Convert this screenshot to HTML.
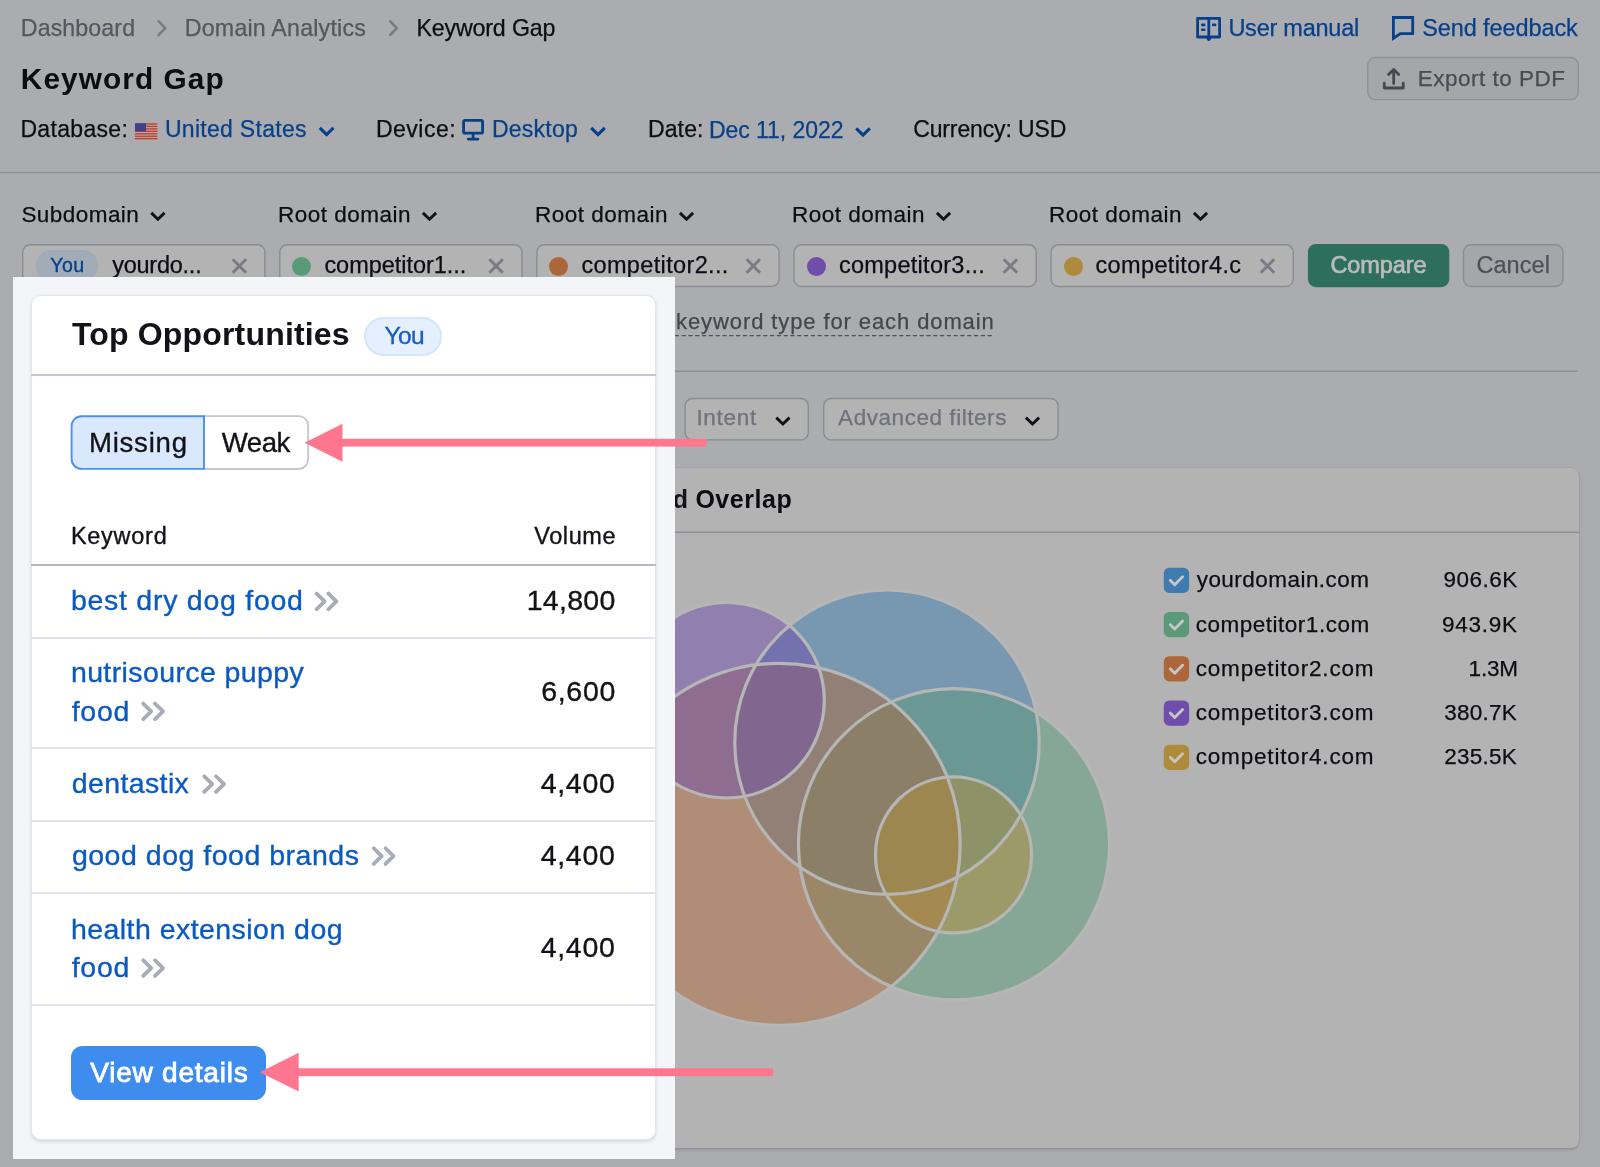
<!DOCTYPE html>
<html lang="en"><head><meta charset="utf-8"><title>Keyword Gap</title>
<style>
html,body{margin:0;padding:0}
body{width:1600px;height:1167px;overflow:hidden;background:#ABACAF;font-family:"Liberation Sans",sans-serif;position:relative}
.a{position:absolute}
#page,#fg,#fgt{position:absolute;left:0;top:0;width:1600px;height:1167px;overflow:hidden;transform:translateZ(0)}
.dot{position:absolute;width:19px;height:19px;border-radius:50%;top:256.6px}
#panel{position:absolute;left:12.5px;top:276.8px;width:662.5px;height:882.4px;background:#F4F5F9}
#card{position:absolute;box-sizing:border-box;left:31px;top:295.4px;width:624.6px;height:845px;background:#fff;border:1px solid #E6E7ED;border-radius:10px;box-shadow:0 1.5px 3.5px rgba(25,27,35,.13)}
.rl{position:absolute;left:31px;width:624.5px;height:2px;background:#E1E2EA}
svg{position:absolute;left:0;top:0;overflow:visible}
</style></head><body>
<div id="page">
<!-- static background graphics -->
<svg width="1600" height="1167" viewBox="0 0 1600 1167" fill="none">
 <!-- breadcrumb chevrons -->
 <g stroke="#7A7C86" stroke-width="2.6" stroke-linecap="round" stroke-linejoin="round">
  <path d="M158.6 21.4 L165.3 28.2 L158.6 35"/><path d="M390.2 21.4 L396.9 28.2 L390.2 35"/>
 </g>
 <!-- user manual icon -->
 <g stroke="#073F88" stroke-width="2.8" stroke-linejoin="round">
  <path d="M1197.6 18.4 H1219.6 V37 H1210.6 L1208.8 39.6 L1207 37 H1197.6 Z"/>
  <path d="M1208.8 18.4 V39.4"/>
 </g>
 <g stroke="#073F88" stroke-width="2.6" stroke-linecap="round"><path d="M1202.3 24.9 H1204.2 M1202.3 29.8 H1204.2 M1213.2 24.9 H1215.1"/></g>
 <!-- feedback icon -->
 <path d="M1393.4 17.5 H1412.7 V33.6 H1400.3 L1393.4 38.4 Z" stroke="#073F88" stroke-width="2.8" stroke-linejoin="miter"/>
 <!-- flag -->
 <g transform="translate(0 0.5)">
  <rect x="135" y="122.8" width="22.3" height="16" fill="#C3A9AA"/>
  <g fill="#B5402D"><rect x="135" y="122.8" width="22.3" height="1.35"/><rect x="135" y="125.25" width="22.3" height="1.35"/><rect x="135" y="127.7" width="22.3" height="1.35"/><rect x="135" y="130.15" width="22.3" height="1.35"/><rect x="135" y="132.6" width="22.3" height="1.35"/><rect x="135" y="135.05" width="22.3" height="1.35"/><rect x="135" y="137.45" width="22.3" height="1.35"/></g>
  <rect x="135" y="122.8" width="11" height="8" fill="#3D418F"/>
 </g>
 <!-- desktop icon -->
 <g stroke="#073F88" stroke-width="2.8" stroke-linejoin="round" stroke-linecap="round">
  <rect x="463.6" y="120.4" width="19" height="12.8" rx="1.5"/><path d="M473.1 134 V138"/><path d="M468.3 139.1 H477.9"/>
 </g>
 <!-- blue dropdown chevrons -->
 <g stroke="#073F88" stroke-width="3.1" stroke-linejoin="miter">
  <path d="M319.8 127.9 L326.6 134.6 L333.4 127.9"/><path d="M591.2 127.9 L598 134.6 L604.8 127.9"/><path d="M856.2 128.3 L863 135 L869.8 128.3"/>
 </g>
 <!-- black chevrons for domain labels -->
 <g stroke="#12131A" stroke-width="2.9" stroke-linejoin="miter">
  <path d="M151.3 212.9 L157.9 219.3 L164.5 212.9"/><path d="M422.9 212.9 L429.5 219.3 L436.1 212.9"/><path d="M679.9 212.9 L686.5 219.3 L693.1 212.9"/><path d="M936.9 212.9 L943.5 219.3 L950.1 212.9"/><path d="M1193.9 212.9 L1200.5 219.3 L1207.1 212.9"/>
 </g>
</svg>
<svg width="1600" height="1167" viewBox="0 0 1600 1167" fill="none"><path d="M0 172.5 H1600" stroke="#8E9096" stroke-width="1.5"/><path d="M22 371.2 H1578" stroke="#8E9096" stroke-width="1.5"/></svg>
<!-- export button -->
<svg width="1600" height="1167" viewBox="0 0 1600 1167" fill="none"><rect x="1367.80" y="57.50" width="210.50" height="42.10" rx="7.5" fill="#A5A6AA" stroke="#909298" stroke-width="1.4"/></svg>
<svg width="1600" height="1167" viewBox="0 0 1600 1167" fill="none">
 <!-- export icon -->
 <g stroke="#464851" stroke-width="2.8" stroke-linecap="round" stroke-linejoin="round">
  <path d="M1384.3 83.2 V88 H1403.2 V83.2"/><path d="M1393.7 83.5 V69.6 M1388.6 74.6 L1393.7 69.4 L1398.8 74.6"/>
 </g>
</svg>
<!-- inputs -->
<svg width="1600" height="1167" viewBox="0 0 1600 1167" fill="none"><rect x="22.70" y="244.80" width="242.20" height="41.70" rx="7.5" fill="#B3B3B3" stroke="#8A8C95" stroke-width="1.4"/><rect x="279.80" y="244.80" width="242.20" height="41.70" rx="7.5" fill="#B3B3B3" stroke="#8A8C95" stroke-width="1.4"/><rect x="536.90" y="244.80" width="242.20" height="41.70" rx="7.5" fill="#B3B3B3" stroke="#8A8C95" stroke-width="1.4"/><rect x="794.00" y="244.80" width="242.20" height="41.70" rx="7.5" fill="#B3B3B3" stroke="#8A8C95" stroke-width="1.4"/><rect x="1051.10" y="244.80" width="242.20" height="41.70" rx="7.5" fill="#B3B3B3" stroke="#8A8C95" stroke-width="1.4"/></svg>
<svg width="1600" height="1167" viewBox="0 0 1600 1167" fill="none"><rect x="36.6" y="250.7" width="60.7" height="30.6" rx="15.3" fill="#A2ACB9" stroke="#9AAABE" stroke-width="1.2"/></svg>
<div class="dot" style="left:292.3px;background:#5A9A79"></div><div class="dot" style="left:549.4px;background:#AB6739"></div><div class="dot" style="left:806.7px;background:#6F4DAB"></div><div class="dot" style="left:1063.7px;background:#AD8B3B"></div>
<svg width="1600" height="1167" viewBox="0 0 1600 1167" fill="none">
 <g stroke="#797B86" stroke-width="3" stroke-linecap="butt">
  <path d="M232.7 259.3 L246.1 272.7 M246.1 259.3 L232.7 272.7"/>
  <path d="M489.4 259.3 L502.8 272.7 M502.8 259.3 L489.4 272.7"/>
  <path d="M746.6 259.3 L760.0 272.7 M760.0 259.3 L746.6 272.7"/>
  <path d="M1003.7 259.3 L1017.1 272.7 M1017.1 259.3 L1003.7 272.7"/>
  <path d="M1260.8 259.3 L1274.2 272.7 M1274.2 259.3 L1260.8 272.7"/>
 </g>
</svg>
<svg width="1600" height="1167" viewBox="0 0 1600 1167" fill="none"><rect x="1307.9" y="244" width="141.4" height="43.2" rx="8" fill="#2E6F5B"/></svg>
<svg width="1600" height="1167" viewBox="0 0 1600 1167" fill="none"><rect x="1463.50" y="244.70" width="99.50" height="41.80" rx="7.5" fill="#A5A6AA" stroke="#8A8C95" stroke-width="1.4"/></svg>
<!-- select keyword type -->
<svg width="1600" height="1167" viewBox="0 0 1600 1167" fill="none"><path d="M600 335.6 H993" stroke="#4F515A" stroke-width="1.3" stroke-dasharray="4.2 2.6"/></svg>

<svg width="1600" height="1167" viewBox="0 0 1600 1167" fill="none"><rect x="685.10" y="398.50" width="123.20" height="41.40" rx="7.5" fill="#B3B3B3" stroke="#8A8C95" stroke-width="1.4"/><rect x="823.70" y="398.50" width="234.40" height="41.40" rx="7.5" fill="#B3B3B3" stroke="#8A8C95" stroke-width="1.4"/></svg>
<svg width="1600" height="1167" viewBox="0 0 1600 1167" fill="none">
 <g stroke="#12131A" stroke-width="2.9" stroke-linejoin="miter"><path d="M776.3 417.6 L782.9 424 L789.5 417.6"/><path d="M1025.9 417.6 L1032.5 424 L1039.1 417.6"/></g>
</svg>
<!-- chart card -->
<div class="a" style="left:560px;top:468px;width:1019.3px;height:680.2px;background:#B3B3B3;border-radius:8px;box-shadow:0 0 0 1px rgba(0,0,0,.035),0 1.5px 3px rgba(0,0,0,.14)"></div>
<svg width="1600" height="1167" viewBox="0 0 1600 1167" fill="none"><path d="M560 532.3 H1579.3" stroke="#8D8F96" stroke-width="1.6"/></svg>
<span class="a" style="right:911.4px;top:487.4px;font-size:25px;font-weight:700;letter-spacing:.6px;color:#12131A;white-space:nowrap;line-height:1">Keyword</span>
<!-- venn -->
<svg width="1600" height="1167" viewBox="0 0 1600 1167" fill="none">
 <g fill-opacity="0.5">
  <circle cx="887" cy="742.2" r="152.2" fill="#3D7BAF"/>
  <circle cx="954" cy="844.3" r="155.6" fill="#5B9B79"/>
  <circle cx="779.2" cy="844.3" r="181" fill="#AB6739"/>
  <circle cx="726.5" cy="700.2" r="97.8" fill="#6F4DAB"/>
  <circle cx="953.5" cy="854.9" r="78" fill="#AF8D3A"/>
 </g>
 <g stroke="#B6B6B6" stroke-width="3.2">
  <circle cx="887" cy="742.2" r="152.2"/>
  <circle cx="954" cy="844.3" r="155.6"/>
  <circle cx="779.2" cy="844.3" r="181"/>
  <circle cx="726.5" cy="700.2" r="97.8"/>
  <circle cx="953.5" cy="854.9" r="78"/>
 </g>
 <!-- legend checkboxes -->
 <g stroke="#C6C6C6" stroke-width="2.9" stroke-linecap="round" stroke-linejoin="round">
  <rect x="1163.8" y="567.7" width="25.3" height="25.3" rx="5.6" fill="#3D7BB0" stroke="none"/><path d="M1170.4 580.4 L1174.7 584.8 L1182.6 576.8"/>
  <rect x="1163.8" y="611.95" width="25.3" height="25.3" rx="5.6" fill="#5A9A79" stroke="none"/><path d="M1170.4 624.65 L1174.7 629.05 L1182.6 621.05"/>
  <rect x="1163.8" y="656.2" width="25.3" height="25.3" rx="5.6" fill="#AB6739" stroke="none"/><path d="M1170.4 668.9 L1174.7 673.3 L1182.6 665.3"/>
  <rect x="1163.8" y="700.45" width="25.3" height="25.3" rx="5.6" fill="#6F4DAB" stroke="none"/><path d="M1170.4 713.15 L1174.7 717.55 L1182.6 709.55"/>
  <rect x="1163.8" y="744.7" width="25.3" height="25.3" rx="5.6" fill="#AD8B3B" stroke="none"/><path d="M1170.4 757.4 L1174.7 761.8 L1182.6 753.8"/>
 </g>
</svg>
<span class="a" style="right:926px;top:310px;font-size:22px;color:#44464F;white-space:nowrap;line-height:1">Select </span>
<span style="position:absolute;white-space:nowrap;line-height:1;left:20.80px;top:16.80px;font-size:23.20px;font-weight:400;letter-spacing:0.100px;color:#55565F;-webkit-text-stroke-width:0.25px;">Dashboard</span>
<span style="position:absolute;white-space:nowrap;line-height:1;left:184.80px;top:16.80px;font-size:23.20px;font-weight:400;letter-spacing:0.213px;color:#55565F;-webkit-text-stroke-width:0.25px;">Domain Analytics</span>
<span style="position:absolute;white-space:nowrap;line-height:1;left:416.40px;top:16.80px;font-size:23.20px;font-weight:400;letter-spacing:-0.140px;color:#0C0D13;-webkit-text-stroke-width:0.25px;">Keyword Gap</span>
<span style="position:absolute;white-space:nowrap;line-height:1;left:20.80px;top:64.40px;font-size:29.80px;font-weight:700;letter-spacing:1.080px;color:#0C0D13;">Keyword Gap</span>
<span style="position:absolute;white-space:nowrap;line-height:1;left:20.40px;top:118.10px;font-size:23.00px;font-weight:400;letter-spacing:0.325px;color:#0C0D13;-webkit-text-stroke-width:0.25px;">Database:</span>
<span style="position:absolute;white-space:nowrap;line-height:1;left:164.90px;top:118.10px;font-size:23.00px;font-weight:400;letter-spacing:0.300px;color:#073F88;-webkit-text-stroke-width:0.25px;">United States</span>
<span style="position:absolute;white-space:nowrap;line-height:1;left:375.90px;top:118.10px;font-size:23.00px;font-weight:400;letter-spacing:0.517px;color:#0C0D13;-webkit-text-stroke-width:0.25px;">Device:</span>
<span style="position:absolute;white-space:nowrap;line-height:1;left:491.90px;top:118.10px;font-size:23.00px;font-weight:400;letter-spacing:0.267px;color:#073F88;-webkit-text-stroke-width:0.25px;">Desktop</span>
<span style="position:absolute;white-space:nowrap;line-height:1;left:647.90px;top:118.10px;font-size:23.00px;font-weight:400;letter-spacing:0.150px;color:#0C0D13;-webkit-text-stroke-width:0.25px;">Date:</span>
<span style="position:absolute;white-space:nowrap;line-height:1;left:708.90px;top:118.50px;font-size:23.00px;font-weight:400;letter-spacing:-0.036px;color:#073F88;-webkit-text-stroke-width:0.25px;">Dec 11, 2022</span>
<span style="position:absolute;white-space:nowrap;line-height:1;left:913.15px;top:118.10px;font-size:23.00px;font-weight:400;letter-spacing:-0.117px;color:#0C0D13;-webkit-text-stroke-width:0.25px;">Currency: USD</span>
<span style="position:absolute;white-space:nowrap;line-height:1;left:1228.40px;top:16.60px;font-size:23.50px;font-weight:400;letter-spacing:-0.240px;color:#073F88;-webkit-text-stroke-width:0.25px;">User manual</span>
<span style="position:absolute;white-space:nowrap;line-height:1;left:1422.20px;top:16.60px;font-size:23.50px;font-weight:400;letter-spacing:-0.100px;color:#073F88;-webkit-text-stroke-width:0.25px;">Send feedback</span>
<span style="position:absolute;white-space:nowrap;line-height:1;left:1417.80px;top:68.10px;font-size:22.50px;font-weight:400;letter-spacing:0.483px;color:#494B54;-webkit-text-stroke-width:0.25px;">Export to PDF</span>
<span style="position:absolute;white-space:nowrap;line-height:1;left:21.40px;top:203.75px;font-size:22.50px;font-weight:400;letter-spacing:0.450px;color:#0C0D13;-webkit-text-stroke-width:0.25px;">Subdomain</span>
<span style="position:absolute;white-space:nowrap;line-height:1;left:277.90px;top:203.75px;font-size:22.50px;font-weight:400;letter-spacing:0.510px;color:#0C0D13;-webkit-text-stroke-width:0.25px;">Root domain</span>
<span style="position:absolute;white-space:nowrap;line-height:1;left:534.90px;top:203.75px;font-size:22.50px;font-weight:400;letter-spacing:0.510px;color:#0C0D13;-webkit-text-stroke-width:0.25px;">Root domain</span>
<span style="position:absolute;white-space:nowrap;line-height:1;left:791.90px;top:203.75px;font-size:22.50px;font-weight:400;letter-spacing:0.510px;color:#0C0D13;-webkit-text-stroke-width:0.25px;">Root domain</span>
<span style="position:absolute;white-space:nowrap;line-height:1;left:1048.90px;top:203.75px;font-size:22.50px;font-weight:400;letter-spacing:0.510px;color:#0C0D13;-webkit-text-stroke-width:0.25px;">Root domain</span>
<span style="position:absolute;white-space:nowrap;line-height:1;left:50.30px;top:256.10px;font-size:19.60px;font-weight:400;letter-spacing:0.400px;color:#073F88;-webkit-text-stroke-width:0.35px;">You</span>
<span style="position:absolute;white-space:nowrap;line-height:1;left:112.15px;top:254.10px;font-size:23.50px;font-weight:400;letter-spacing:-0.238px;color:#0C0D13;-webkit-text-stroke-width:0.25px;">yourdo...</span>
<span style="position:absolute;white-space:nowrap;line-height:1;left:324.40px;top:254.10px;font-size:23.50px;font-weight:400;letter-spacing:-0.031px;color:#0C0D13;-webkit-text-stroke-width:0.25px;">competitor1...</span>
<span style="position:absolute;white-space:nowrap;line-height:1;left:581.40px;top:254.10px;font-size:23.50px;font-weight:400;letter-spacing:0.354px;color:#0C0D13;-webkit-text-stroke-width:0.25px;">competitor2...</span>
<span style="position:absolute;white-space:nowrap;line-height:1;left:838.90px;top:254.10px;font-size:23.50px;font-weight:400;letter-spacing:0.277px;color:#0C0D13;-webkit-text-stroke-width:0.25px;">competitor3...</span>
<span style="position:absolute;white-space:nowrap;line-height:1;left:1095.40px;top:254.10px;font-size:23.50px;font-weight:400;letter-spacing:0.383px;color:#0C0D13;-webkit-text-stroke-width:0.25px;">competitor4.c</span>
<span style="position:absolute;white-space:nowrap;line-height:1;left:1330.40px;top:254.30px;font-size:23.50px;font-weight:400;letter-spacing:-0.067px;color:#BBBBBB;-webkit-text-stroke-width:0.7px;">Compare</span>
<span style="position:absolute;white-space:nowrap;line-height:1;left:1476.40px;top:254.30px;font-size:23.50px;font-weight:400;letter-spacing:0.080px;color:#4F515A;-webkit-text-stroke-width:0.25px;">Cancel</span>
<span style="position:absolute;white-space:nowrap;line-height:1;left:676.10px;top:311.40px;font-size:22.00px;font-weight:400;letter-spacing:0.896px;color:#44464F;-webkit-text-stroke-width:0.25px;">keyword type for each domain</span>
<span style="position:absolute;white-space:nowrap;line-height:1;left:696.40px;top:407.10px;font-size:22.50px;font-weight:400;letter-spacing:0.720px;color:#6F717D;-webkit-text-stroke-width:0.25px;">Intent</span>
<span style="position:absolute;white-space:nowrap;line-height:1;left:838.10px;top:407.10px;font-size:22.50px;font-weight:400;letter-spacing:0.547px;color:#6F717D;-webkit-text-stroke-width:0.25px;">Advanced filters</span>
<span style="position:absolute;white-space:nowrap;line-height:1;left:695.40px;top:487.40px;font-size:25.00px;font-weight:700;letter-spacing:0.533px;color:#0C0D13;">Overlap</span>
<span style="position:absolute;white-space:nowrap;line-height:1;left:1196.70px;top:569.40px;font-size:22.50px;font-weight:400;letter-spacing:0.462px;color:#0C0D13;-webkit-text-stroke-width:0.25px;">yourdomain.com</span>
<span style="position:absolute;white-space:nowrap;line-height:1;left:1443.60px;top:569.40px;font-size:22.50px;font-weight:400;letter-spacing:0.480px;color:#0C0D13;-webkit-text-stroke-width:0.25px;">906.6K</span>
<span style="position:absolute;white-space:nowrap;line-height:1;left:1195.70px;top:613.65px;font-size:22.50px;font-weight:400;letter-spacing:0.514px;color:#0C0D13;-webkit-text-stroke-width:0.25px;">competitor1.com</span>
<span style="position:absolute;white-space:nowrap;line-height:1;left:1441.90px;top:613.65px;font-size:22.50px;font-weight:400;letter-spacing:0.760px;color:#0C0D13;-webkit-text-stroke-width:0.25px;">943.9K</span>
<span style="position:absolute;white-space:nowrap;line-height:1;left:1195.70px;top:657.90px;font-size:22.50px;font-weight:400;letter-spacing:0.829px;color:#0C0D13;-webkit-text-stroke-width:0.25px;">competitor2.com</span>
<span style="position:absolute;white-space:nowrap;line-height:1;left:1468.60px;top:657.90px;font-size:22.50px;font-weight:400;letter-spacing:-0.200px;color:#0C0D13;-webkit-text-stroke-width:0.25px;">1.3M</span>
<span style="position:absolute;white-space:nowrap;line-height:1;left:1195.70px;top:702.15px;font-size:22.50px;font-weight:400;letter-spacing:0.829px;color:#0C0D13;-webkit-text-stroke-width:0.25px;">competitor3.com</span>
<span style="position:absolute;white-space:nowrap;line-height:1;left:1444.20px;top:702.15px;font-size:22.50px;font-weight:400;letter-spacing:0.240px;color:#0C0D13;-webkit-text-stroke-width:0.25px;">380.7K</span>
<span style="position:absolute;white-space:nowrap;line-height:1;left:1195.70px;top:746.40px;font-size:22.50px;font-weight:400;letter-spacing:0.829px;color:#0C0D13;-webkit-text-stroke-width:0.25px;">competitor4.com</span>
<span style="position:absolute;white-space:nowrap;line-height:1;left:1444.20px;top:746.40px;font-size:22.50px;font-weight:400;letter-spacing:0.240px;color:#0C0D13;-webkit-text-stroke-width:0.25px;">235.5K</span>
</div>

<!-- highlighted call-out panel -->
<div id="fg">
<div id="panel"></div>
<div id="card"></div>
<div class="a" style="left:31px;top:373.6px;width:624.5px;height:2px;background:#C6C8D1"></div>
<div class="a" style="left:364.4px;top:317.3px;width:77.4px;height:38.9px;box-sizing:border-box;border-radius:20px;background:#E4F0FE;border:2px solid #D3E6FC"></div>
<!-- toggle -->
<svg width="1600" height="1167" viewBox="0 0 1600 1167" fill="none">
 <path d="M203.4 416.1 H298.7 a9.4 9.4 0 0 1 9.4 9.4 V459.6 a9.4 9.4 0 0 1 -9.4 9.4 H203.4" fill="#fff" stroke="#C4C7CF" stroke-width="1.8"/>
 <path d="M204 416.2 H81.4 a9.8 9.8 0 0 0 -9.8 9.8 V459.1 a9.8 9.8 0 0 0 9.8 9.8 H204 Z" fill="#D9E8FC" stroke="#4B90EC" stroke-width="1.9"/>
</svg>
<!-- table lines -->
<div class="a" style="left:31px;top:564.3px;width:624.5px;height:2px;background:#B3B6C2"></div>
<div class="rl" style="top:636.8px"></div><div class="rl" style="top:746.9px"></div><div class="rl" style="top:819.5px"></div><div class="rl" style="top:891.8px"></div><div class="rl" style="top:1004.2px"></div>
<!-- view details button -->
<div class="a" style="left:70.9px;top:1045.6px;width:195px;height:54.9px;border-radius:11.5px;background:#3F8CEF"></div>
<svg width="1600" height="1167" viewBox="0 0 1600 1167" fill="none">
 <g stroke="#A9ABB6" stroke-width="3.8" stroke-linecap="round" stroke-linejoin="round">
  <path d="M0 0 L8 7.85 L0 15.7 M11.8 0 L19.8 7.85 L11.8 15.7" transform="translate(316.60 593.55)"/>
  <path d="M0 0 L8 7.85 L0 15.7 M11.8 0 L19.8 7.85 L11.8 15.7" transform="translate(143.20 703.55)"/>
  <path d="M0 0 L8 7.85 L0 15.7 M11.8 0 L19.8 7.85 L11.8 15.7" transform="translate(204.20 776.25)"/>
  <path d="M0 0 L8 7.85 L0 15.7 M11.8 0 L19.8 7.85 L11.8 15.7" transform="translate(373.70 848.25)"/>
  <path d="M0 0 L8 7.85 L0 15.7 M11.8 0 L19.8 7.85 L11.8 15.7" transform="translate(143.20 960.25)"/>
 </g>
 <!-- annotation arrows -->
 <g fill="#FF778F">
  <rect x="335" y="438.8" width="371.2" height="7.8"/><path d="M304.6 442.7 L342.5 423.7 L342.5 461.7 Z"/>
  <rect x="292" y="1068.3" width="481.2" height="7.9"/><path d="M259.8 1072.3 L298.7 1052.8 L298.7 1091.6 Z"/>
 </g>
</svg>
</div>
<div id="fgt">
<span style="position:absolute;white-space:nowrap;line-height:1;left:71.90px;top:318.40px;font-size:32.00px;font-weight:700;letter-spacing:0.175px;color:#111318;">Top Opportunities</span>
<span style="position:absolute;white-space:nowrap;line-height:1;left:384.60px;top:323.80px;font-size:24.50px;font-weight:400;letter-spacing:-0.600px;color:#1A5CC2;-webkit-text-stroke-width:0.35px;">You</span>
<span style="position:absolute;white-space:nowrap;line-height:1;left:88.90px;top:429.30px;font-size:27.60px;font-weight:400;letter-spacing:0.767px;color:#111318;-webkit-text-stroke-width:0.35px;">Missing</span>
<span style="position:absolute;white-space:nowrap;line-height:1;left:221.70px;top:429.30px;font-size:27.60px;font-weight:400;letter-spacing:-0.467px;color:#111318;-webkit-text-stroke-width:0.35px;">Weak</span>
<span style="position:absolute;white-space:nowrap;line-height:1;left:70.90px;top:525.30px;font-size:23.50px;font-weight:400;letter-spacing:0.733px;color:#111318;-webkit-text-stroke-width:0.35px;">Keyword</span>
<span style="position:absolute;white-space:nowrap;line-height:1;left:534.30px;top:525.30px;font-size:23.50px;font-weight:400;letter-spacing:0.560px;color:#111318;-webkit-text-stroke-width:0.35px;">Volume</span>
<span style="position:absolute;white-space:nowrap;line-height:1;left:70.90px;top:586.40px;font-size:28.50px;font-weight:400;letter-spacing:0.738px;color:#0A5AC2;-webkit-text-stroke-width:0.35px;">best dry dog food</span>
<span style="position:absolute;white-space:nowrap;line-height:1;left:70.90px;top:658.20px;font-size:28.50px;font-weight:400;letter-spacing:0.387px;color:#0A5AC2;-webkit-text-stroke-width:0.35px;">nutrisource puppy</span>
<span style="position:absolute;white-space:nowrap;line-height:1;left:71.70px;top:696.50px;font-size:28.50px;font-weight:400;letter-spacing:0.733px;color:#0A5AC2;-webkit-text-stroke-width:0.35px;">food</span>
<span style="position:absolute;white-space:nowrap;line-height:1;left:71.70px;top:769.20px;font-size:28.50px;font-weight:400;letter-spacing:0.387px;color:#0A5AC2;-webkit-text-stroke-width:0.35px;">dentastix</span>
<span style="position:absolute;white-space:nowrap;line-height:1;left:71.90px;top:841.20px;font-size:28.50px;font-weight:400;letter-spacing:0.511px;color:#0A5AC2;-webkit-text-stroke-width:0.35px;">good dog food brands</span>
<span style="position:absolute;white-space:nowrap;line-height:1;left:70.90px;top:915.00px;font-size:28.50px;font-weight:400;letter-spacing:0.453px;color:#0A5AC2;-webkit-text-stroke-width:0.35px;">health extension dog</span>
<span style="position:absolute;white-space:nowrap;line-height:1;left:71.70px;top:953.20px;font-size:28.50px;font-weight:400;letter-spacing:0.733px;color:#0A5AC2;-webkit-text-stroke-width:0.35px;">food</span>
<span style="position:absolute;white-space:nowrap;line-height:1;left:526.70px;top:586.30px;font-size:28.50px;font-weight:400;letter-spacing:0.280px;color:#111318;-webkit-text-stroke-width:0.35px;">14,800</span>
<span style="position:absolute;white-space:nowrap;line-height:1;left:541.20px;top:677.40px;font-size:28.50px;font-weight:400;letter-spacing:0.700px;color:#111318;-webkit-text-stroke-width:0.35px;">6,600</span>
<span style="position:absolute;white-space:nowrap;line-height:1;left:540.70px;top:768.80px;font-size:28.50px;font-weight:400;letter-spacing:0.700px;color:#111318;-webkit-text-stroke-width:0.35px;">4,400</span>
<span style="position:absolute;white-space:nowrap;line-height:1;left:540.70px;top:841.20px;font-size:28.50px;font-weight:400;letter-spacing:0.700px;color:#111318;-webkit-text-stroke-width:0.35px;">4,400</span>
<span style="position:absolute;white-space:nowrap;line-height:1;left:540.70px;top:933.30px;font-size:28.50px;font-weight:400;letter-spacing:0.700px;color:#111318;-webkit-text-stroke-width:0.35px;">4,400</span>
<span style="position:absolute;white-space:nowrap;line-height:1;left:90.20px;top:1058.60px;font-size:28.00px;font-weight:400;letter-spacing:0.782px;color:#FFFFFF;-webkit-text-stroke-width:0.8px;">View details</span>
</div>
</body></html>
